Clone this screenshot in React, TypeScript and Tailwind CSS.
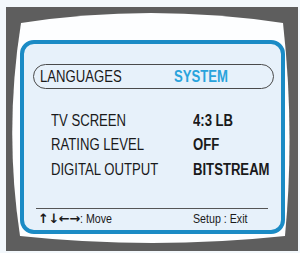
const sans = { fontFamily: '"Liberation Sans", Arial, sans-serif' };

function Bezel() {
  return (
    <svg className="absolute inset-0" width="292" height="244" viewBox="6 7 292 244">
      <path d="M21 23 Q150 3 283 23 Q295 130 285 236 Q152 250 20 236 Q4 130 21 23 Z" fill="#fdfeff" />
    </svg>
  );
}

// condensed look: the screen uses a narrow Helvetica, squeeze Liberation Sans
function N({ children, className = "" }: { children: React.ReactNode; className?: string }) {
  return <span className={"inline-block origin-left scale-x-[0.82] whitespace-nowrap " + className}>{children}</span>;
}

const rows = [
  ["TV SCREEN", "4:3 LB"],
  ["RATING LEVEL", "OFF"],
  ["DIGITAL OUTPUT", "BITSTREAM"],
];

export default function App() {
  return (
    <div className="w-[300px] h-[253px] bg-[#f3f8fc] pl-[6px] pt-[7px]" style={sans}>
      <div className="relative w-[292px] h-[244px] bg-[#5e5e5e] pl-[14px] pt-[33px]">
        <Bezel />
        <div className="relative flex flex-col w-[265px] h-[194px] rounded-[14px] border-4 border-[#1b8bc5] bg-[#e7f1fa] text-[#1a1a1a] overflow-hidden">
          <div className="ml-[9px] mt-[20px] flex items-center w-[241px] h-[25px] rounded-full border border-[#4a4a4a] pl-[6px] text-[16px] leading-none">
            <span className="w-[134px] shrink-0"><N>LANGUAGES</N></span>
            <N className="font-bold text-[#29a3dc]">SYSTEM</N>
          </div>
          <div className="mt-[19.5px] flex flex-col text-[16px] leading-[24.5px]">
            {rows.map(([k, v]) => (
              <div key={k} className="flex">
                <span className="ml-[27px] w-[142px] shrink-0"><N>{k}</N></span>
                <N className="font-bold">{v}</N>
              </div>
            ))}
          </div>
          <div className="mt-auto ml-[12px] mr-[13px] h-px bg-[#555]" />
          <div className="flex items-center h-[20px] text-[13px] mb-[1px]">
            <span className="ml-[14px] w-[155px] shrink-0 flex items-center">
              <span className="font-bold text-[13px] tracking-[-0.5px]" style={{ fontFamily: '"DejaVu Sans", sans-serif' }}>↑↓←→</span>
              <N>: Move</N>
            </span>
            <N>Setup : Exit</N>
          </div>
        </div>
      </div>
    </div>
  );
}
